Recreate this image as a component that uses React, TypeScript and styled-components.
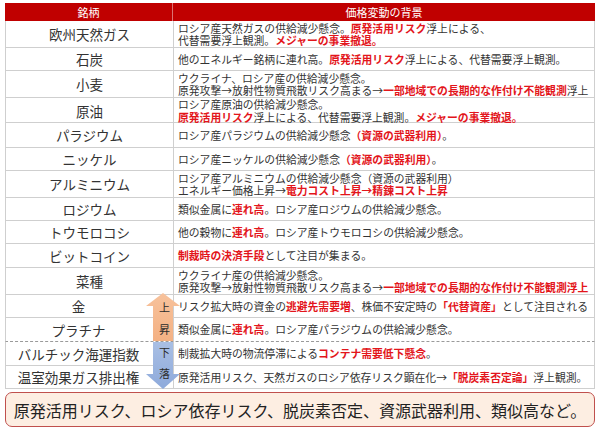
import React from "react";
import styled, { createGlobalStyle } from "styled-components";

const GlobalStyle = createGlobalStyle`
  body {
    margin: 0;
    background: #fff;
    font-family: "Noto Sans CJK JP", "Noto Sans", sans-serif;
    color: #333;
  }
`;

const Page = styled.div`
  width: 600px;
  height: 430px;
  box-sizing: border-box;
  padding: 3px 5px 0 5px;
  overflow: hidden;
`;

const Table = styled.div`
  position: relative;
`;

const HeaderRow = styled.div`
  display: grid;
  grid-template-columns: 168px 1fr;
  height: 18px;
  background: #c00000;
  color: #fff;
  font-size: 11px;
`;

const HeaderCell = styled.div<{ $divider?: boolean }>`
  display: flex;
  align-items: center;
  justify-content: center;
  border-right: ${(p) => (p.$divider ? "1px solid rgba(255,255,255,0.45)" : "none")};
`;

const Row = styled.div<{ $h: number; $dashed?: boolean }>`
  display: grid;
  grid-template-columns: 168px 1fr;
  height: ${(p) => p.$h}px;
  box-sizing: border-box;
  border-left: 1px solid #cfcfcf;
  border-right: 1px solid #cfcfcf;
  border-bottom: ${(p) => (p.$dashed ? "1px dashed #9a9a9a" : "1px solid #cfcfcf")};
`;

const NameCell = styled.div<{ $arrow?: boolean }>`
  display: flex;
  align-items: center;
  justify-content: center;
  padding-right: ${(p) => (p.$arrow ? "22px" : "0")};
  border-right: 1px solid #cfcfcf;
  font-size: 13.5px;
  color: #333;
  white-space: nowrap;
`;

const DescCell = styled.div`
  display: flex;
  flex-direction: column;
  justify-content: center;
  padding-left: 4px;
  font-size: 10.8px;
  line-height: 12.5px;
  color: #333;
  white-space: nowrap;
`;

const Em = styled.span`
  color: #e3151b;
  font-weight: 700;
`;

const Arrow = styled.div<{ $top: number; $h: number; $pad: number; $lh: number }>`
  position: absolute;
  left: 141px;
  top: ${(p) => p.$top}px;
  width: 34px;
  height: ${(p) => p.$h}px;
  z-index: 2;

  svg {
    position: absolute;
    inset: 0;
  }
`;

const ArrowText = styled.div<{ $pad: number; $lh: number }>`
  position: relative;
  display: flex;
  flex-direction: column;
  align-items: center;
  padding: ${(p) => p.$pad}px 0 0 3px;
  font-size: 11px;
  line-height: ${(p) => p.$lh}px;
  color: #2b2b2b;
`;

const Summary = styled.div`
  margin-top: 3px;
  height: 35px;
  box-sizing: border-box;
  border: 1.5px solid #c0504d;
  border-radius: 7px;
  background: #fdeee2;
  display: flex;
  align-items: center;
  justify-content: center;
  font-size: 16px;
  color: #222;
  white-space: nowrap;
`;

type Item = {
  name: string;
  h: number;
  desc: React.ReactNode;
  arrow?: boolean;
  dashed?: boolean;
};

const rows: Item[] = [
  {
    name: "欧州天然ガス",
    h: 27,
    desc: (
      <>
        <span>
          ロシア産天然ガスの供給減少懸念。<Em>原発活用リスク</Em>浮上による、
        </span>
        <span>
          代替需要浮上観測。<Em>メジャーの事業撤退。</Em>
        </span>
      </>
    ),
  },
  {
    name: "石炭",
    h: 23,
    desc: (
      <span>
        他のエネルギー銘柄に連れ高。<Em>原発活用リスク</Em>浮上による、代替需要浮上観測。
      </span>
    ),
  },
  {
    name: "小麦",
    h: 27,
    desc: (
      <>
        <span>ウクライナ、ロシア産の供給減少懸念。</span>
        <span>
          原発攻撃→放射性物質飛散リスク高まる→<Em>一部地域での長期的な作付け不能観測</Em>浮上
        </span>
      </>
    ),
  },
  {
    name: "原油",
    h: 25,
    desc: (
      <>
        <span>ロシア産原油の供給減少懸念。</span>
        <span>
          <Em>原発活用リスク</Em>浮上による、代替需要浮上観測。<Em>メジャーの事業撤退。</Em>
        </span>
      </>
    ),
  },
  {
    name: "パラジウム",
    h: 25,
    desc: (
      <span>
        ロシア産パラジウムの供給減少懸念<Em>（資源の武器利用）</Em>。
      </span>
    ),
  },
  {
    name: "ニッケル",
    h: 23,
    desc: (
      <span>
        ロシア産ニッケルの供給減少懸念<Em>（資源の武器利用）</Em>。
      </span>
    ),
  },
  {
    name: "アルミニウム",
    h: 27,
    desc: (
      <>
        <span>ロシア産アルミニウムの供給減少懸念（資源の武器利用）</span>
        <span>
          エネルギー価格上昇→<Em>電力コスト上昇→精錬コスト上昇</Em>
        </span>
      </>
    ),
  },
  {
    name: "ロジウム",
    h: 23,
    desc: (
      <span>
        類似金属に<Em>連れ高</Em>。ロシア産ロジウムの供給減少懸念。
      </span>
    ),
  },
  {
    name: "トウモロコシ",
    h: 23,
    desc: (
      <span>
        他の穀物に<Em>連れ高</Em>。ロシア産トウモロコシの供給減少懸念。
      </span>
    ),
  },
  {
    name: "ビットコイン",
    h: 24,
    desc: (
      <span>
        <Em>制裁時の決済手段</Em>として注目が集まる。
      </span>
    ),
  },
  {
    name: "菜種",
    h: 27,
    desc: (
      <>
        <span>ウクライナ産の供給減少懸念。</span>
        <span>
          原発攻撃→放射性物質飛散リスク高まる→<Em>一部地域での長期的な作付け不能観測浮上</Em>
        </span>
      </>
    ),
  },
  {
    name: "金",
    h: 23,
    arrow: true,
    desc: (
      <span>
        リスク拡大時の資金の<Em>逃避先需要増</Em>、株価不安定時の<Em>「代替資産」</Em>として注目される
      </span>
    ),
  },
  {
    name: "プラチナ",
    h: 24,
    arrow: true,
    dashed: true,
    desc: (
      <span>
        類似金属に<Em>連れ高</Em>。ロシア産パラジウムの供給減少懸念。
      </span>
    ),
  },
  {
    name: "バルチック海運指数",
    h: 24,
    arrow: true,
    desc: (
      <span>
        制裁拡大時の物流停滞による<Em>コンテナ需要低下懸念</Em>。
      </span>
    ),
  },
  {
    name: "温室効果ガス排出権",
    h: 23,
    arrow: true,
    desc: (
      <span>
        原発活用リスク、天然ガスのロシア依存リスク顕在化→<Em>「脱炭素否定論」</Em>浮上観測。
      </span>
    ),
  },
];

const UpArrow = () => (
  <Arrow $top={290} $h={48} $pad={3} $lh={22}>
    <svg width="34" height="48" viewBox="0 0 34 48">
      <defs>
        <linearGradient id="upG" x1="0" y1="0" x2="0" y2="1">
          <stop offset="0" stopColor="#f7c29c" />
          <stop offset="1" stopColor="#f4b183" />
        </linearGradient>
      </defs>
      <polygon points="17,0 34,13 27,13 27,48 7,48 7,13 0,13" fill="url(#upG)" />
    </svg>
    <ArrowText $pad={3} $lh={22}>
      <span>上</span>
      <span>昇</span>
    </ArrowText>
  </Arrow>
);

const DownArrow = () => (
  <Arrow $top={339} $h={47} $pad={0} $lh={21}>
    <svg width="34" height="47" viewBox="0 0 34 47">
      <defs>
        <linearGradient id="downG" x1="0" y1="0" x2="0" y2="1">
          <stop offset="0" stopColor="#a9bfe4" />
          <stop offset="1" stopColor="#8eaadb" />
        </linearGradient>
      </defs>
      <polygon points="7,0 27,0 27,32 34,32 17,47 0,32 7,32" fill="url(#downG)" />
    </svg>
    <ArrowText $pad={0} $lh={21}>
      <span>下</span>
      <span>落</span>
    </ArrowText>
  </Arrow>
);

const App = () => {
  return (
    <>
      <GlobalStyle />
      <Page>
        <Table>
          <HeaderRow>
            <HeaderCell $divider>銘柄</HeaderCell>
            <HeaderCell>価格変動の背景</HeaderCell>
          </HeaderRow>
          {rows.map((r) => (
            <Row key={r.name} $h={r.h} $dashed={r.dashed}>
              <NameCell $arrow={r.arrow}>{r.name}</NameCell>
              <DescCell>{r.desc}</DescCell>
            </Row>
          ))}
          <UpArrow />
          <DownArrow />
        </Table>
        <Summary>
          原発活用リスク、ロシア依存リスク、脱炭素否定、資源武器利用、類似高など。
        </Summary>
      </Page>
    </>
  );
};

export default App;
